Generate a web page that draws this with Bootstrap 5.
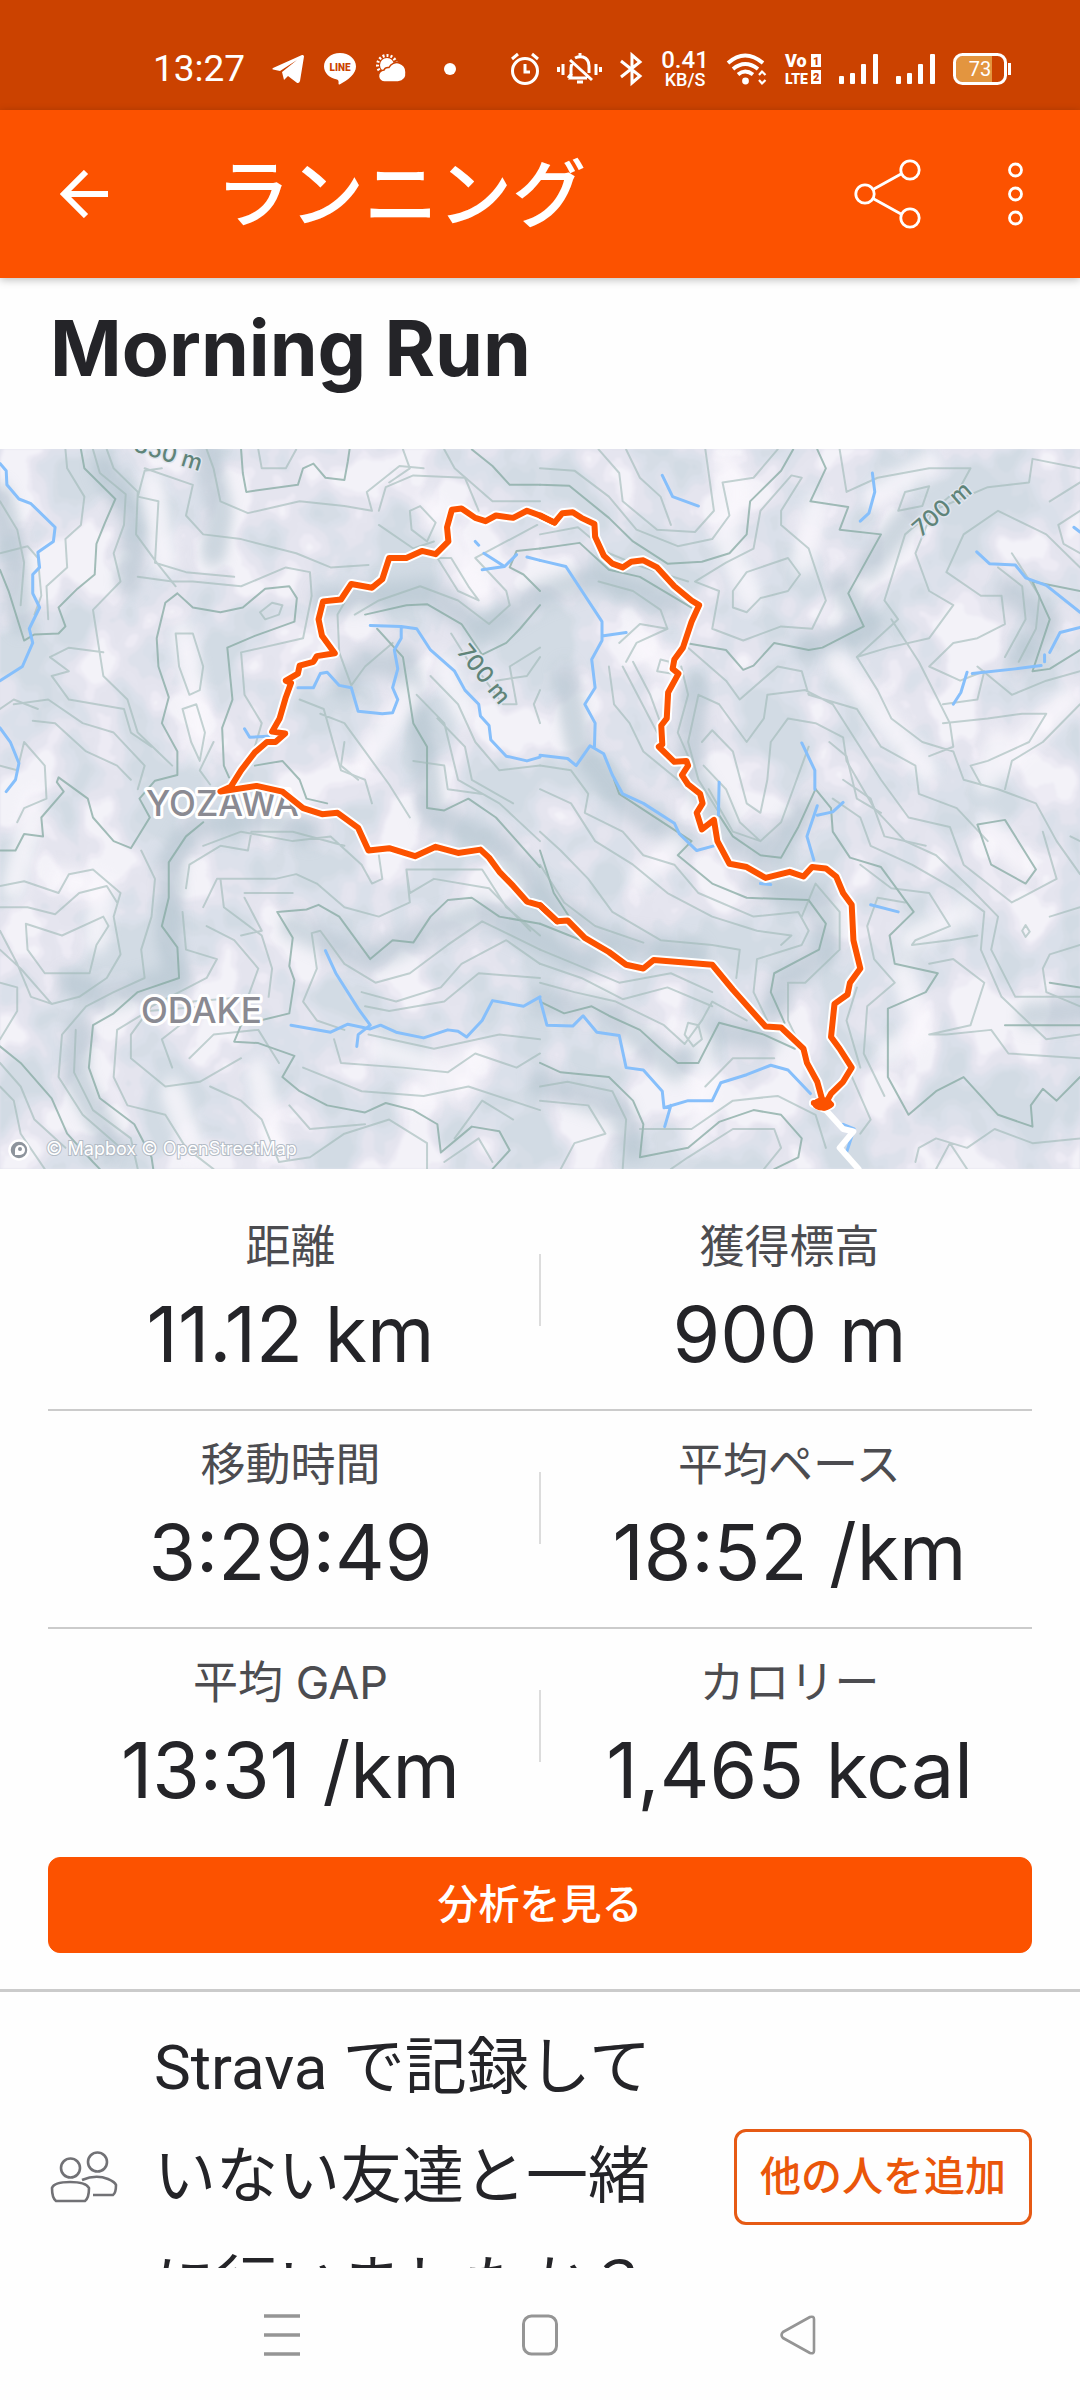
<!DOCTYPE html>
<html lang="ja">
<head>
<meta charset="utf-8">
<meta name="viewport" content="width=device-width, initial-scale=1">
<title>Morning Run</title>
<link href="https://cdn.jsdelivr.net/npm/bootstrap@5.3.0/dist/css/bootstrap.min.css" rel="stylesheet">
<style>
:root { --brand: #fc5200; --brand-dark: #cb4200; --ink: #242428; --rule: #cbcbcb; }
body { font-family: Inter, "Noto Sans CJK JP", sans-serif; color: var(--ink); background: #fefefe; }
svg { display: block; flex-shrink: 0; }
.status-strip { background: var(--brand-dark); height: 110px; padding: 28px 69px 0 153px; font-family: Roboto, sans-serif; }
.status-strip svg { overflow: visible; }
.status-right { gap: 18px; }
.clock { font-size: 37px; line-height: 44px; width: 89px; white-space: nowrap; }
.net-speed { width: 48px; font-size: 24px; line-height: 22px; font-weight: 500; }
.net-unit { font-size: 18px; line-height: 18px; display: block; }
.app-bar { background: var(--brand); height: 168px; padding: 0 57px 0 60px; position: relative; z-index: 1; box-shadow: 0 2px 8px rgba(0,0,0,.25); }
.app-title { font-size: 74px; line-height: 96px; font-weight: 500; margin-left: 108px; }
.bar-btn { background: none; border: 0; padding: 0; color: #fff; display: block; }
.bar-actions { gap: 87px; }
.activity-name { font-size: 77px; line-height: 92px; font-weight: 700; padding: 24px 50px 55px; }
.route-map { width: 100%; aspect-ratio: 3 / 2; }
.stats { padding: 24px 48px 0; }
.stat-row { padding: 24px 0 30px; }
.stat-row + .stat-row { border-top: 2px solid var(--rule); }
.stat-cell { flex: 1 1 0; text-align: center; }
.stat-cell dt { font-size: 45px; line-height: 60px; font-weight: 400; color: #4c4c50; }
.stat-cell dd { font-size: 77px; line-height: 90px; margin: 12px 0 0; }
.stat-split { width: 2px; height: 72px; margin: 37px 6px 0; background: #dcdcdc; }
.cta { --bs-btn-bg: var(--brand); --bs-btn-border-color: var(--brand); --bs-btn-color: #fff; --bs-btn-border-radius: 12px; height: 96px; font-size: 41px; font-weight: 500; margin-top: 12px; }
.friends { border-top: 3px solid var(--rule); margin-top: 36px; padding: 21px 48px 0; }
.friends p { font-family: Roboto, "Noto Sans CJK JP", sans-serif; font-size: 62px; line-height: 109px; margin: 0 40px 0 36px; }
.cta-outline { --bs-btn-color: #ea560a; --bs-btn-border-color: #e65a14; --bs-btn-border-width: 3px; --bs-btn-border-radius: 12px; --bs-btn-padding-x: 23px; height: 96px; font-size: 41px; font-weight: 500; white-space: nowrap; flex-shrink: 0; }
.main-area { min-height: 0; }
.sys-nav { height: 132px; padding: 2px 264px 0; }
.sys-nav .bar-btn { color: #959595; }
.river { fill: none; stroke: #86bffb; stroke-width: 3; }
.index-line { stroke: #86aaa2; stroke-width: 2; opacity: .75; }
.minor-line { stroke: #9fb9b6; stroke-width: 2; opacity: .6; }
.contours path, .river path, .run-path, .slopes path { vector-effect: non-scaling-stroke; fill: none; stroke-linejoin: round; stroke-linecap: round; }
.place { font: 500 35px Inter, sans-serif; fill: #8a8a92; stroke: #fff; stroke-width: 6; paint-order: stroke; stroke-linejoin: round; }
.height-tag { font: 500 23px Inter, sans-serif; fill: #5f8479; stroke: #dfe5ee; stroke-width: 3; paint-order: stroke; text-anchor: middle; }
.credit { font: 18px Inter, sans-serif; fill: #fff; stroke: #b4bcc6; stroke-width: 2; paint-order: stroke; }
</style>
<script src="https://cdn.jsdelivr.net/npm/bootstrap@5.3.0/dist/js/bootstrap.bundle.min.js"></script>
</head>
<body class="vh-100 d-flex flex-column overflow-hidden">

<div class="status-strip d-flex align-items-center justify-content-between text-white flex-shrink-0">
  <div class="d-flex align-items-center">
    <span class="clock">13:27</span>
    <svg style="margin-left:30px" width="32" height="30" viewBox="0 0 32 30" fill="#fff"><path d="M1 14 30 1q2-.5 2 1.500L28 27q-1 3-3.500 1.500L16 22l-4 4-2-8L25 6 8 17 1 15.500Q-.5 15 1 14z"/></svg>
    <svg style="margin-left:20px" width="32" height="32" viewBox="0 0 32 32"><path d="M16 0C7 0 0 6 0 13.500 0 20 5.500 25 13 26.500q2 .5 1.500 4 0 1.500 1.500.7C24 27 32 21 32 13.500 32 6 25 0 16 0z" fill="#fff"/><text x="16" y="18" text-anchor="middle" font-family="Roboto" font-weight="900" font-size="10" fill="#cb4200">LINE</text></svg>
    <svg style="margin-left:20px" width="32" height="30" viewBox="0 0 32 30"><circle cx="11" cy="11" r="9.500" fill="none" stroke="#fff" stroke-width="3" stroke-dasharray="2 2"/><circle cx="11" cy="11" r="7" fill="#fff"/><path d="M9 28a6 6 0 0 1-1-12q1-3 5-2.500a9 9 0 0 1 17 4.500q1 9-8 10z" fill="#fff" stroke="#cb4200" stroke-width="1.500"/></svg>
    <svg style="margin-left:36px" width="12" height="12"><circle cx="6" cy="6" r="6" fill="#fff"/></svg>
  </div>
  <div class="status-right d-flex align-items-center">
    <svg width="28" height="32" viewBox="0 0 28 32" fill="none" stroke="#fff" stroke-width="3"><circle cx="14" cy="18" r="12.500"/><path d="M14 11v8h5M1 6l6-5M27 6l-6-5"/></svg>
    <svg width="45" height="32" viewBox="0 0 45 32" fill="none" stroke="#fff" stroke-width="3"><path d="M1.500 14v5M6 11v11M39 11v11M43.500 14v5M13 7 35 27M11 25h19M14 24v-9q0-3 2-5M18 5q4-2 8-1 6 2 6 9v7M11 25l4-5M23 0v3M20 29h6"/></svg>
    <svg width="23" height="32" viewBox="0 0 23 32" fill="none" stroke="#fff" stroke-width="3"><path d="M1 8 20 23l-8 7V2l8 7L1 24"/></svg>
    <div class="net-speed text-center">0.41<span class="net-unit">KB/S</span></div>
    <svg width="40" height="32" viewBox="0 0 40 32" fill="none" stroke="#fff" stroke-width="3.800"><path d="M1 10q17-15 35 0M6 16q12-10 25 0M11 21.500q7-6 15 0"/><circle cx="18.500" cy="28" r="3.400" fill="#fff" stroke="none"/><path d="m32 22 3-3.500 3.500 3.500M32 27l3 3.500 3.500-3.500" stroke-width="2.200"/></svg>
    <svg width="36" height="32" viewBox="0 0 36 32" font-family="Roboto" font-weight="900" fill="#fff"><text x="0" y="14" font-size="18">Vo</text><text x="0" y="31" font-size="14">LTE</text><rect x="26" y="1" width="10" height="13"/><rect x="26" y="17" width="10" height="14"/><text x="28" y="12" font-size="11" fill="#cb4200">1</text><text x="28" y="28" font-size="11" fill="#cb4200">2</text></svg>
    <svg width="39" height="32" viewBox="0 0 39 32" fill="#fff"><rect y="23" width="5" height="8" rx="1"/><rect x="11" y="20" width="5" height="11" rx="1"/><rect x="22" y="11" width="5" height="20" rx="1"/><rect x="34" y="1" width="5" height="30" rx="1"/></svg>
    <svg width="39" height="32" viewBox="0 0 39 32" fill="#fff"><rect y="23" width="5" height="8" rx="1"/><rect x="11" y="20" width="5" height="11" rx="1"/><rect x="22" y="11" width="5" height="20" rx="1"/><rect x="34" y="1" width="5" height="30" rx="1"/></svg>
    <svg width="58" height="32" viewBox="0 0 58 32"><path d="M10 3h29v26H10q-7 0-7-7V10q0-7 7-7z" fill="#e3953f"/><rect x="1.500" y="1.500" width="51" height="29" rx="8" fill="none" stroke="#fff" stroke-width="3"/><rect x="55" y="10" width="3" height="12" fill="#fff"/><text x="27" y="23" text-anchor="middle" font-family="Roboto" font-size="20" fill="#fff">73</text></svg>
  </div>
</div>

<header class="app-bar d-flex align-items-center text-white flex-shrink-0">
  <button class="bar-btn" type="button" aria-label="戻る"><svg width="48" height="48" viewBox="0 0 48 48" fill="none" stroke="#fff" stroke-width="6"><path d="M48 24H5M26 2 4 24l22 22"/></svg></button>
  <span class="app-title">ランニング</span>
  <div class="bar-actions d-flex align-items-center ms-auto">
    <button class="bar-btn" type="button" aria-label="共有"><svg width="67" height="70" viewBox="0 0 67 70" fill="none" stroke="#fff" stroke-width="2.800"><circle cx="11" cy="35" r="9.200"/><circle cx="56" cy="11" r="9.200"/><circle cx="56" cy="59" r="9.200"/><path d="m19 30.500 28-15.500M19 39.500 47 55"/></svg></button>
    <button class="bar-btn" type="button" aria-label="メニュー"><svg width="15" height="64" viewBox="0 0 15 64" fill="none" stroke="#fff" stroke-width="2.800"><circle cx="7.500" cy="8" r="6"/><circle cx="7.500" cy="32" r="6"/><circle cx="7.500" cy="56" r="6"/></svg></button>
  </div>
</header>

<main class="main-area flex-grow-1 overflow-hidden">
  <h1 class="activity-name mb-0">Morning Run</h1>

  <svg class="route-map" viewBox="0 0 1080 720" preserveAspectRatio="xMidYMid slice" role="img" aria-label="ルートマップ">
    <defs>
      <filter id="relief" x="0" y="0" width="100%" height="100%" color-interpolation-filters="sRGB">
        <feTurbulence type="fractalNoise" baseFrequency="0.016 0.013" numOctaves="3" seed="11"/>
        <feColorMatrix values="2.800 0 0 0 -.9  2.800 0 0 0 -.9  2.800 0 0 0 -.9  0 0 0 0 1"/>
        <feComponentTransfer>
          <feFuncR type="discrete" tableValues=".825 .84 .855 .87 .895 .90 .93 .955"/>
          <feFuncG type="discrete" tableValues=".86 .87 .88 .885 .895 .90 .925 .95"/>
          <feFuncB type="discrete" tableValues=".895 .905 .92 .925 .935 .94 .96 .975"/>
        </feComponentTransfer>
        <feGaussianBlur stdDeviation="1"/>
      </filter>
      <filter id="haze" x="-5%" y="-5%" width="110%" height="110%"><feGaussianBlur stdDeviation="16"/></filter>
    </defs>
    <rect width="1080" height="720" fill="#e1e2ec"/>
    <rect width="1080" height="720" filter="url(#relief)"/>

    <g transform="translate(0 -9) scale(.3444 .4719)">
      <!-- shaded slopes and bright ridges -->
      <g class="slopes" filter="url(#haze)" stroke="#b4c4cf" stroke-width="26" opacity=".6">
        <path d="M0,120 40,240 60,380M300,60 400,180 370,300M600,20 640,150 620,240M490,900 560,820 740,800 900,830M500,900 490,1060 520,1140 300,1180 200,1150M940,340 1100,330 1240,320 1400,400 1568,330 1720,290 1950,350M1170,460 1230,640 1250,790 1450,860 1568,960 1750,1060 2020,1090M850,1030 1070,1100 1240,1040 1400,1000 1568,1060 1700,1110M230,1250 220,1350 330,1500M1000,520 1060,470 1170,480M1640,500 1680,650 1800,760 1980,850M1568,1190 1750,1200 1960,1330 2080,1250 2230,1270M1568,1360 1800,1420 1840,1500M2020,520 2000,700 2130,850 2230,880 2340,780M2200,940 2390,980 2400,1080 2270,1150 2250,1200M2440,310 2530,400 2340,440M2640,160 2520,270M2930,320 3040,380 2960,470M2990,1220 3136,1210"/>
      </g>
      <g class="slopes" filter="url(#haze)" stroke="#fbf8fd" stroke-width="24" opacity=".75">
        <path d="M440,90 480,260M530,410 570,550 580,660M100,770 40,950M180,930 300,950 280,1060M1250,140 1400,330M1190,540 1060,680M1350,580 1290,480M1100,1290 1300,1340 1400,1300M500,1380 560,1500M750,1340 800,1500M2100,50 2150,110 2100,200 2180,330M2370,140 2330,260M1850,430 1930,480M2430,470 2580,600 2690,700M2540,120 2700,50M2870,820 2970,900M3100,550 2860,720 2900,640M2640,1060 2800,1000M2620,1130 2680,1250 2580,1300M1960,860 1860,930M1990,1250 2040,1280M2050,1330 2020,1480M1180,1400 1360,1360"/>
      </g>

      <g class="contours index-line">
        <path d="M700,20 705,70 715,110 865,95 880,60 910,50 945,80 1000,85 1010,45 1015,20M235,20 245,60 335,125 305,175 280,220 275,285 225,315 170,355 190,395 170,410 100,412 70,425 40,355 25,320 0,275M1370,20 1430,55 1480,95 1568,95"/>
        <path d="M515,325 480,345 455,420 460,480 490,545 470,600 515,660 515,710 450,722 405,760 435,800 380,865 330,850 270,800 255,760 170,715 165,725 185,745 120,800 125,840 70,835 45,870 0,870M515,325 560,355 640,365 705,355 770,315 840,310 862,335 855,385 740,415 660,440 675,550 645,610 650,690 665,715"/>
        <path d="M590,810 540,840 490,895 490,970 470,1030 515,1075 520,1140 400,1170 330,1215 270,1240 258,1330 290,1395 390,1450 440,1520 445,1545M0,1285 60,1320 150,1395 195,1470 270,1530 290,1545M1095,400 1170,460 1200,600 1240,650 1240,780 1290,785 1360,760 1440,800 1568,905M740,690 820,680 870,720 890,760 950,770"/>
        <path d="M840,1215 855,1145 840,1115 850,1055 805,1000 890,995 925,985 985,1010 1075,1100 1140,1060 1200,1065 1250,1010 1300,975 1370,970 1450,1010 1568,1025M840,1215 700,1240 680,1275 750,1278 855,1305 820,1350 870,1380 950,1410 1060,1425 1120,1405 1200,1420 1270,1450 1280,1510 1370,1455 1450,1465 1480,1505 1430,1545M1060,370 1180,350 1240,348 1340,390 1400,455 1470,430 1510,400 1568,350M1568,230 1500,235 1480,270 1520,285 1568,320"/>
        <g transform="translate(1568)">
          <path d="M0,95 85,97 200,165 270,215 370,262 470,258 550,240 600,200 610,130 700,65 735,20M805,20 830,60 785,130 895,142 870,190 990,200 895,325 940,395 820,440 780,445 680,430 620,478 590,487 540,445 435,432M0,230 115,218 200,275 290,290 440,355M215,720 230,750 440,850 400,880 500,940 600,970 780,975 830,1025 810,1080 680,1130 670,1170 710,1235M1270,815 1350,805 1440,910 1410,940 1310,900zM800,740 750,820 700,885 640,880 560,840 520,795"/>
          <path d="M800,740 845,780 850,830 900,885 990,905 1085,1000 1015,1050 1030,1110 1155,1130 1120,1170 1010,1205 1010,1350 1070,1430 1150,1380 1230,1350 1330,1430 1430,1455 1425,1410 1460,1375 1500,1400 1568,1350M1430,300 1480,380 1430,490 1480,485 1568,445M1430,300 1568,320M0,1025 120,1060 200,1090M0,1190 70,1215 150,1200 200,1220 290,1250 350,1290 400,1320 460,1320 520,1235 650,1260 740,1290M0,1320 60,1340 200,1350 270,1400 300,1450 290,1520 430,1500 520,1445 620,1420 700,1430 760,1480 750,1520 680,1545M0,870 40,960 120,1050M1350,1240 1568,1240M1568,1160 1480,1150"/>
        </g>
      </g>

      <g class="contours minor-line">
        <path d="M270,20 290,70 365,115 360,180 330,240 350,300 270,360 285,430 300,500 370,550 400,620 500,690M190,20 195,60 245,120 235,180 190,210 195,270 135,310 140,380M310,20 330,60 400,110 395,200 455,260 510,310M420,60 560,95 540,160 590,200 700,210 860,240 960,270 1070,265M600,20 620,60 640,130 720,155 870,130 1000,140 1080,150 1065,110 1160,55 1230,60M0,130 50,190 70,260 60,350M400,120 420,65 470,60M400,120 460,130 450,260 540,280 680,290M750,20 760,60 830,60 860,20M1100,180 1200,230 1260,215M1100,150 1120,100 1200,75 1350,80 1390,150M1190,150 1220,140 1265,175 1240,215 1195,190zM145,460 200,440 300,450M145,460 200,490 150,500 200,550 360,570 380,620 440,650"/>
        <path d="M510,410 560,410 590,480 580,530 550,540 520,480zM530,570 570,560 595,620 580,680 555,640zM755,365 790,345 820,350 810,370 770,380zM400,290 500,300 560,300 700,310 830,270 900,280 905,330 880,420 700,450 710,540 760,600 740,650M40,560 140,550 240,600 330,620 420,690 400,740M95,595 160,600 250,660 340,690 380,720M0,690 50,700 70,640 130,690 135,760 70,780 50,810M620,640 580,700 610,730M870,550 940,570 990,700 1060,720 1080,770M930,580 1000,600 1060,660 1130,730 1190,800M1000,345 980,370 985,450 1020,520 1060,480 1140,430M1030,370 1100,340 1220,310 1330,340 1420,390 1480,350 1470,320 1380,250 1560,180M1270,250 1330,320 1390,340 1360,310 1310,250z"/>
        <path d="M590,860 700,830 850,850 960,840 1050,900 1080,940 1110,930 1100,880M540,950 550,900 640,860 720,870 730,830 850,830 1000,860M530,1000 540,1080 630,1100 600,1140 440,1200 380,1260 380,1310 480,1370 580,1360 700,1310M590,990 630,930 800,930 860,920 920,940 1000,990 1100,1010 1190,980 1180,910 1260,910 1400,910 1470,990 1568,1050M600,1030 680,1060 750,1120 720,1180 560,1190 540,1230 470,1270 500,1330M710,960 850,960M710,970 760,1040 700,1050M905,1045 930,1040 1000,1110 1090,1150 1190,1130 1300,1070 1400,1020 1568,1080M905,1045 920,1120 880,1190 920,1230 1000,1250M640,930 650,990 760,1050 790,1120 780,1180M1180,910 1190,960 1260,930 1420,950 1540,1040M1050,1170 1150,1190 1280,1160 1340,1110 1470,1060 1568,1110M1060,1200 1130,1210 1290,1190 1390,1130 1568,1140"/>
        <path d="M0,945 70,935 170,960 200,920 270,910 350,960 330,1010 350,1090 310,1140 230,1180 150,1195 60,1120 0,1080M0,990 80,990 160,1005 230,960 310,945 340,980M75,1025 180,1050 300,1010 315,1030 280,1070 260,1130 130,1130 80,1080zM0,1040 50,1110 90,1180 150,1195M0,1150 50,1160 50,1210 0,1270M410,870 450,930 440,1010 410,1080 420,1140 330,1170 250,1200 180,1260 170,1350 240,1430 350,1500M220,1250 215,1340 270,1420 380,1480 400,1545M330,1350 340,1250 430,1210 600,1200M330,1350 370,1410 480,1430 540,1500 620,1545M0,1320 60,1370 100,1440 190,1500M0,1370 40,1400 60,1470 130,1545M550,1310 620,1260 750,1250 810,1320M610,1370 700,1400 760,1440 810,1530 900,1520 1000,1470 1130,1440 1240,1490 1240,1545M970,1270 990,1320 1170,1330 1300,1340 1380,1300 1500,1330 1568,1300M840,1410 900,1460 1060,1450M880,1330 1050,1380 1230,1390 1360,1370 1568,1420M1070,1260 1260,1290 1450,1260 1568,1270M1290,1530 1390,1480 1430,1530"/>
        <path d="M1290,20 1320,60 1430,130 1568,130M1170,20 1190,60 1130,90M1400,500 1460,560 1500,560 1480,480 1568,440M1440,510 1530,500 1568,460M1310,410 1370,480M1210,540 1290,600 1330,720 1450,770 1568,850M1200,680 1290,690 1300,740 1400,750M1270,590 1350,650 1370,720 1490,770M1250,500 1330,560 1380,640 1450,700 1568,690M1568,530 1550,560 1568,600M1040,720 990,690 1000,640M1320,1480 1400,1400 1490,1440M0,240 80,225 110,250 120,330 100,370M0,570 40,550 110,570"/>
        <g transform="translate(1568)">
          <path d="M0,60 100,65 200,120 280,190 400,225 500,210 550,160 530,90 620,80 690,20M170,20 230,70 240,130 340,190 450,195 505,150 480,20M250,20 290,80 350,120 380,180M0,200 110,185 200,240 300,270 430,300M700,150 760,80 730,75 640,150 620,230 540,260 450,300 520,320 500,400 590,425 700,395 790,400 830,340 780,230 700,180zM560,320 600,280 720,250 755,285 720,320 640,335 600,365 560,355zM870,20 890,110 980,80 1130,60 1250,60 1220,100 1060,200 1000,340 1040,380 920,460 1010,440 1130,420 1200,350 1130,320 1090,240 1140,150 1300,100 1420,90 1430,40 1568,60M1040,150 1060,110 1130,98 1110,140zM1480,130 1568,90M1505,180 1568,150M1505,180 1520,220 1568,240M1180,280 1230,200 1330,150 1470,200 1568,270M1180,280 1280,330 1340,330 1350,390 1270,420 1200,430 1130,480 1220,510 1290,490 1270,550 1170,560"/>
          <path d="M230,430 290,390 370,400 350,360 270,320 170,300M250,470 280,430 370,400M340,490 350,465 375,470 380,495zM200,480 215,560 260,600 300,660 400,720M240,480 290,550 340,620M270,470 320,540 350,600M410,480 430,540 400,620 430,670M430,440 540,510 580,550 690,480 760,490 780,540 920,570 990,650 1090,690 1100,750 1210,780 1300,850M460,540 430,640 460,720 520,790M460,540 520,560 600,640 650,590 660,540 770,530 850,560 920,640 990,720 1070,800 1190,820 1230,900 1370,980 1500,930 1460,830M470,640 500,615 560,660 600,770 640,790 660,720 670,640 720,590 800,600 880,630 890,680 970,780 1060,850 1150,880 1250,950 1330,1010 1310,1080 1380,1180 1568,1180M475,690 540,740 580,810 640,850 700,810 740,730 780,650M490,740 560,830 640,850M920,460 980,530 1020,590 1110,640 1200,660 1230,720 1330,740 1440,770 1500,850 1568,920M1020,380 1100,470 1190,600 1200,650 1130,670"/>
          <path d="M1170,600 1300,590 1400,580 1470,580 1420,640 1300,680 1250,690 1280,730M1270,480 1370,540 1470,510 1568,490M1350,740 1370,680 1460,640 1568,560M1330,270 1400,310 1410,380 1350,460M1370,240 1450,330 1440,400 1390,470M840,640 890,670 920,760 990,790M850,760 930,800 960,860 1080,900 1200,950 1290,1000 1280,1080 1340,1180 1470,1270 1568,1260M880,720 960,760 1000,840 1120,860M930,900 1020,950 1130,960 1190,1030 1090,1060 1080,1070 1190,1060 1270,1050M950,1030 980,970 1060,980M950,1030 970,1100 1030,1150 950,1200 940,1300 1000,1390M1130,1260 1250,1240 1290,1150 1200,1100 1130,1110M1130,1260 1180,1260 1310,1250 1360,1300 1568,1310M1460,1120 1480,1090 1568,1070M1460,1120 1470,1170 1568,1200M1540,840 1568,850M1480,1010 1568,990M1090,1530 1100,1500 1150,1480 1240,1500 1320,1460 1430,1490 1568,1480M1150,1545 1190,1490 1240,1545M1400,1040 1410,1028 1422,1042 1410,1053z"/>
          <path d="M0,690 90,700 140,750 130,790 240,830 300,880 390,900 460,960 620,1010 750,1000 780,1040 760,1070 630,1100 620,1170 660,1230M0,740 90,770 160,850 270,900 370,960 500,1010 630,1040 730,1050 700,1070M0,830 60,870 140,930 210,1000 350,1060 500,1070 580,1080 570,1140M0,900 70,980 160,1030 300,1065M0,1080 100,1110 230,1150 380,1130 500,1170M0,1110 120,1140 240,1185 370,1160 500,1200M0,1150 100,1170 220,1190 360,1240 420,1280 470,1230 500,1190 600,1230M420,1260 430,1235 460,1240 470,1270 445,1285zM480,1370 560,1310 680,1310M760,1010 800,940 870,1000 870,1080 770,1150 720,1150 720,1230 780,1320M0,1370 80,1360 210,1380 250,1440 240,1545M0,1400 140,1410 190,1470 100,1490 60,1545M380,1545 430,1520 560,1460 680,1460 700,1500 650,1545M290,1460 440,1460 560,1400 690,1390 800,1430 830,1500M900,1340 960,1440 930,1470M920,1160 890,1230 930,1330"/>
        </g>
      </g>

      <g class="river">
        <path d="M0,50 18,65 20,95 55,125 90,135 160,185 155,215 110,238 115,270 95,285 95,325 115,355 85,400 95,430 65,480 0,510M0,610 30,640 55,685 45,720 18,745M710,612 725,630 780,628M865,525 910,525 930,495 950,492 985,520 1020,525 1040,575 1110,580 1140,578 1155,550 1140,525 1155,485 1145,445 1165,420 1165,395 1075,393 1165,395 1210,400 1250,445 1320,490 1350,530 1390,560 1395,585 1420,605 1425,635 1470,670 1530,680 1568,672M1380,215 1390,223M1405,240 1465,268 1400,275M1465,268 1500,243M1530,248 1568,255M945,1082 975,1130 1040,1205 1075,1240 1040,1260 1036,1285M845,1240 960,1255 1010,1238 1075,1248 1105,1240 1150,1255 1230,1267 1300,1250 1330,1253 1355,1265 1400,1230 1430,1188 1520,1200 1568,1180"/>
        <path transform="translate(1568)" d="M0,668 80,675 105,690 145,648 185,665 210,710 240,750 300,770 390,812 405,835 455,870 505,860M0,255 75,268 180,385 180,425 150,465 160,525 130,560 160,600 158,650M185,415 250,408M0,1185 20,1240 95,1242 125,1220 165,1255 230,1262 250,1330 300,1335 355,1380 360,1415 430,1400 500,1400 525,1362 600,1345 670,1325 720,1335 785,1385M380,1410 362,1455M355,75 385,120 460,140M965,70 972,110 955,155 930,172M1268,237 1305,262 1380,265 1410,292 1470,308 1568,365M1568,397 1510,408 1480,450M1465,455 1465,470M1455,478 1380,485 1255,495M1240,492 1222,535 1200,560M760,642 798,700 798,740M520,725 518,795M805,775 775,840 795,890M805,795 850,788 880,768M960,985 1040,1000M640,940 670,942M880,1450 912,1460 890,1510M1550,185 1568,195"/>
      </g>
    </g>

    <text class="height-tag" transform="translate(478 230) rotate(51)">700 m</text>
    <text class="height-tag" transform="translate(947 66) rotate(-41)">700 m</text>
    <text class="height-tag" transform="translate(166 12) rotate(17)">350 m</text>
    <text class="place" x="146" y="367">YOZAWA</text>
    <text class="place" x="141" y="574">ODAKE</text>

    <g transform="translate(0 -9) scale(.3444 .4719)">
      <path class="run-path" stroke="#fff" stroke-width="6" transform="translate(1568)" d="M830,1420 880,1460 910,1465 870,1500 925,1545"/>
      <defs>
        <g id="run-line">
          <path class="run-path" d="M1610,175 1568,160 1530,150 1490,165 1440,160 1410,172 1380,165 1340,145 1312,148 1298,185 1302,215 1265,242 1225,235 1180,250 1130,250 1110,295 1080,313 1020,305 990,338 938,342 925,380 935,415 972,452 920,458 910,470 870,478 865,495 830,510 845,515 830,545 812,590 790,618 828,622 800,640 775,640 740,662 700,700 670,735 640,745 745,733 820,745 880,780 935,793 980,790 1040,822 1070,870 1130,865 1205,882 1265,862 1330,875 1395,868 1420,885 1450,915 1490,945 1530,978 1568,986 1618,1020"/>
          <path class="run-path" transform="translate(1568)" d="M0,160 42,175 65,155 95,153 120,165 158,178 160,205 185,245 210,262 240,270 265,258 300,255 340,270 390,310 440,340 462,350 440,385 415,440 390,465 385,485 402,495 372,535 368,590 352,605 355,645 345,650 390,682 425,680 430,690 412,710 430,730 465,750 472,770 455,790 470,825 505,805 515,850 550,898 600,905 655,928 725,915 765,925 790,905 830,908 860,925 880,960 905,985 910,1060 930,1120 900,1150 893,1175 855,1195 845,1265 870,1290 905,1330 880,1360 845,1385 830,1405 795,1405 825,1415 845,1408 820,1400 805,1360 775,1320 765,1290 700,1245 655,1243 560,1165 500,1112 420,1107 330,1102 300,1120 250,1112 200,1085 130,1055 80,1018 50,1020 0,986"/>
        </g>
      </defs>
      <use href="#run-line" stroke="#fff" stroke-width="10"/>
      <use href="#run-line" stroke="#fc5200" stroke-width="6"/>
      <ellipse cx="2389" cy="1407" rx="30" ry="14" fill="#fc5200"/>
    </g>

    <circle cx="19" cy="701" r="9.500" fill="#8d949c" stroke="#fff" stroke-width="2.500"/><path d="M15 706v-5a5 5 0 1 1 5 5z" fill="#fff"/><circle cx="20" cy="700" r="2" fill="#8d949c"/>
    <text class="credit" x="46" y="706">© Mapbox © OpenStreetMap</text>
  </svg>

  <section class="stats">
    <dl class="stat-row d-flex mb-0">
      <div class="stat-cell"><dt>距離</dt><dd>11.12 km</dd></div>
      <div class="stat-split"></div>
      <div class="stat-cell"><dt>獲得標高</dt><dd>900 m</dd></div>
    </dl>
    <dl class="stat-row d-flex mb-0">
      <div class="stat-cell"><dt>移動時間</dt><dd>3:29:49</dd></div>
      <div class="stat-split"></div>
      <div class="stat-cell"><dt>平均ペース</dt><dd>18:52 /km</dd></div>
    </dl>
    <dl class="stat-row d-flex mb-0">
      <div class="stat-cell"><dt>平均 GAP</dt><dd>13:31 /km</dd></div>
      <div class="stat-split"></div>
      <div class="stat-cell"><dt>カロリー</dt><dd>1,465 kcal</dd></div>
    </dl>
    <button class="btn cta w-100 d-block" type="button">分析を見る</button>
  </section>

  <section class="friends d-flex align-items-center">
    <svg width="70" height="54" viewBox="0 0 70 54" fill="none" stroke="#717175" stroke-width="2.600"><circle cx="22.500" cy="18" r="9.500"/><circle cx="49.500" cy="12" r="9.500"/><path d="M8 51Q4 48 4 38q2-6 18-6t19 6q0 10-4 13zM34 30q14-6 26-1 7 3 8 6 0 8-3 10H45"/></svg>
    <p class="flex-grow-1">Strava で記録していない友達と一緒に行いましたか？</p>
    <button class="btn cta-outline" type="button">他の人を追加</button>
  </section>
</main>

<nav class="sys-nav d-flex align-items-center justify-content-between flex-shrink-0">
  <button class="bar-btn" type="button" aria-label="履歴"><svg width="36" height="42" viewBox="0 0 36 42" stroke="currentColor" stroke-width="3.500"><path d="M0 2h36M0 21h36M0 40h36"/></svg></button>
  <button class="bar-btn" type="button" aria-label="ホーム"><svg width="36" height="42" viewBox="0 0 36 42" fill="none" stroke="currentColor" stroke-width="3"><rect x="1.500" y="2" width="33" height="38" rx="8"/></svg></button>
  <button class="bar-btn" type="button" aria-label="戻る"><svg width="36" height="42" viewBox="0 0 36 42" fill="none" stroke="currentColor" stroke-width="2.600" stroke-linejoin="round"><path d="M3 18 30 3q4-1 4 2v32q0 3-4 2L3 24q-3-3 0-6z"/></svg></button>
</nav>
</body>
</html>
